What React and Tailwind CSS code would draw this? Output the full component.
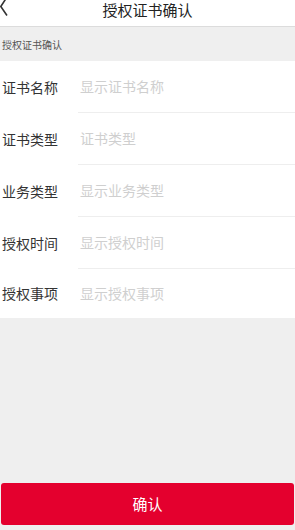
import React from "react";

const rows = [
  ["证书名称", "显示证书名称"],
  ["证书类型", "证书类型"],
  ["业务类型", "显示业务类型"],
  ["授权时间", "显示授权时间"],
  ["授权事项", "显示授权事项"],
];

export default function App() {
  return (
    <div
      className="h-[530px] w-[295px] flex flex-col bg-[#efefef] overflow-hidden"
      style={{ fontFamily: '"Noto Sans CJK SC", "Noto Sans", sans-serif' }}
    >
      <div className="relative h-[27px] bg-white border-b border-[#dcdcdc] shrink-0">
        <svg className="absolute left-0 top-0" width="10" height="17" viewBox="0 0 10 17">
          <path d="M7 -3 L0.8 6.5 L7 15.5" fill="none" stroke="#333" strokeWidth="1.6" />
        </svg>
        <div className="text-center text-[15px] leading-[19px] text-[#222]">授权证书确认</div>
      </div>
      <div className="h-[34px] flex items-center pl-[2px] text-[10px] text-[#555] shrink-0">授权证书确认</div>
      <div className="bg-white shrink-0">
        {rows.map(([label, ph], i) => (
          <div key={label} className="flex h-[52px] last:h-[49px]">
            <div className="w-[78px] pl-[2px] flex items-center text-[14px] text-[#333]">{label}</div>
            <div
              className={
                "flex-1 flex items-center pl-[2px] text-[14px] text-[#cfcfcf] " +
                (i < rows.length - 1 ? "border-b border-[#eeeeee]" : "")
              }
            >
              {ph}
            </div>
          </div>
        ))}
      </div>
      <div className="mt-auto mb-[5px] mx-[1px] h-[42px] rounded-[3px] bg-[#e4002e] flex items-center justify-center text-white text-[15px]">
        确认
      </div>
    </div>
  );
}
